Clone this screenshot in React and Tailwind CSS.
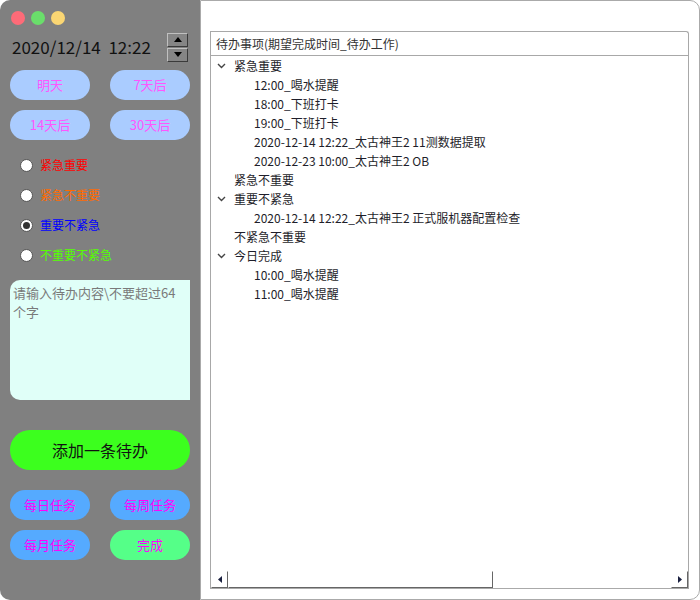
import { useState } from 'react';

const FONT = { fontFamily: '"Segoe UI", "Noto Sans CJK SC", "Noto Sans", sans-serif' };

const tree = [
  { label: '紧急重要', open: true, items: ['12:00_喝水提醒', '18:00_下班打卡', '19:00_下班打卡', '2020-12-14 12:22_太古神王2 11测数据提取', '2020-12-23 10:00_太古神王2 OB'] },
  { label: '紧急不重要', open: false, items: [] },
  { label: '重要不紧急', open: true, items: ['2020-12-14 12:22_太古神王2 正式服机器配置检查'] },
  { label: '不紧急不重要', open: false, items: [] },
  { label: '今日完成', open: true, items: ['10:00_喝水提醒', '11:00_喝水提醒'] },
];

const levels = [
  { label: '紧急重要', color: 'text-[#ff0000]' },
  { label: '紧急不重要', color: 'text-[#ff6a00]' },
  { label: '重要不紧急', color: 'text-[#0000ff]' },
  { label: '不重要不紧急', color: 'text-[#55ff00]' },
];

function Pill({ children, className }) {
  return (
    <button className={`h-[30px] w-[80px] rounded-full text-[13px] ${className}`}>{children}</button>
  );
}

function SpinButton({ up }) {
  return (
    <button className="flex h-[14px] w-[21px] items-center justify-center border border-t-[#c0c0c0] border-l-[#c0c0c0] border-r-[#3a3a3a] border-b-[#3a3a3a] bg-[#858585]">
      <svg width="8" height="5" viewBox="0 0 8 5">
        {up ? <path d="M0 5 L4 0 L8 5 Z" fill="#000" /> : <path d="M0 0 L4 5 L8 0 Z" fill="#000" />}
      </svg>
    </button>
  );
}

function Chevron() {
  return (
    <svg width="9" height="6" viewBox="0 0 9 6" className="mr-[8px]">
      <path d="M1 1 L4.5 4.5 L8 1" stroke="#444" strokeWidth="1.4" fill="none" />
    </svg>
  );
}

export default function App() {
  const [level, setLevel] = useState(2);

  return (
    <div className="flex h-[600px] w-[700px] bg-white" style={FONT}>
      {/* left control column */}
      <div className="flex h-full w-[200px] flex-col rounded-l-[10px] bg-[#808080] px-[10px]">
        <div className="flex h-[34px] items-center gap-[6px] pl-[1px] pt-[2px]">
          <span className="size-[14px] rounded-full bg-[#fe6b78]" />
          <span className="size-[14px] rounded-full bg-[#6ade6b]" />
          <span className="size-[14px] rounded-full bg-[#fad673]" />
        </div>
        <div className="flex h-[26px] items-center justify-between">
          <span className="pl-[2px] text-[17px] text-[#111]">2020/12/14&nbsp;&nbsp;12:22</span>
          <div className="mr-[2px] flex flex-col gap-[1px]">
            <SpinButton up />
            <SpinButton />
          </div>
        </div>
        <div className="mt-[10px] grid grid-cols-2 gap-x-[20px] gap-y-[10px]">
          <Pill className="bg-[#aaccff] text-[#ff55ff]">明天</Pill>
          <Pill className="bg-[#aaccff] text-[#ff55ff]">7天后</Pill>
          <Pill className="bg-[#aaccff] text-[#ff55ff]">14天后</Pill>
          <Pill className="bg-[#aaccff] text-[#ff55ff]">30天后</Pill>
        </div>
        <div className="mt-[10px] flex flex-col">
          {levels.map((l, i) => (
            <label key={l.label} className="flex h-[30px] cursor-pointer items-center" onClick={() => setLevel(i)}>
              <span className="ml-[10px] mr-[7px] flex size-[13px] items-center justify-center rounded-full border border-[#555] bg-white">
                {level === i && <span className="size-[7px] rounded-full bg-[#333]" />}
              </span>
              <span className={`text-[12px] ${l.color}`}>{l.label}</span>
            </label>
          ))}
        </div>
        <textarea
          className="mt-[10px] h-[120px] w-full resize-none rounded-l-[10px] bg-[#e0fff8] px-[3px] py-[3px] text-[13px] leading-[19px] outline-none placeholder:text-[#7a7a7a]"
          placeholder="请输入待办内容\不要超过64个字"
        />
        <button className="mt-[30px] h-[40px] w-full rounded-[20px] bg-[#3cff1e] text-[16px] text-[#111]">添加一条待办</button>
        <div className="mt-[20px] grid grid-cols-2 gap-x-[20px] gap-y-[10px]">
          <Pill className="bg-[#55aaff] text-[#ff00ff]">每日任务</Pill>
          <Pill className="bg-[#55aaff] text-[#ff00ff]">每周任务</Pill>
          <Pill className="bg-[#55aaff] text-[#ff00ff]">每月任务</Pill>
          <Pill className="bg-[#55ff88] text-[#ff00ff]">完成</Pill>
        </div>
      </div>

      {/* right tree panel */}
      <div className="flex h-full flex-1 flex-col rounded-r-[10px] border border-[#aaa] pb-[10px] pl-[9px] pr-[10px] pt-[30px]">
        <div className="flex flex-1 flex-col rounded-tr-[3px] border border-[#a8a8a8] border-b-[#aaa]">
          <div className="flex h-[24px] items-center border-b border-[#a8a8a8] pl-[5px] text-[12px] text-[#333]">
            待办事项(期望完成时间_待办工作)
          </div>
          <div className="flex-1 text-[12px] text-[#1e1e2a]">
            {tree.map((g) => (
              <div key={g.label}>
                <div className="flex h-[19px] items-center pl-[6px]">
                  {g.open ? <Chevron /> : <span className="w-[17px]" />}
                  <span>{g.label}</span>
                </div>
                {g.items.map((it) => (
                  <div key={it} className="flex h-[19px] items-center whitespace-nowrap pl-[43px]">{it}</div>
                ))}
              </div>
            ))}
          </div>
          <div className="flex h-[17px] items-stretch">
            <div className="flex w-[17px] items-center justify-center border border-l-white border-t-white border-r-[#666] border-b-[#666]">
              <svg width="4" height="7" viewBox="0 0 4 7"><path d="M4 0 L0 3.5 L4 7 Z" fill="#1a2040" /></svg>
            </div>
            <div className="w-[265px] border border-l-white border-t-white border-r-[#666] border-b-[#666]" />
            <div className="flex-1 bg-white" />
            <div className="flex w-[17px] items-center justify-center border border-l-white border-t-white border-r-[#666] border-b-[#666]">
              <svg width="4" height="7" viewBox="0 0 4 7"><path d="M0 0 L4 3.5 L0 7 Z" fill="#1a2040" /></svg>
            </div>
          </div>
        </div>
      </div>
    </div>
  );
}
